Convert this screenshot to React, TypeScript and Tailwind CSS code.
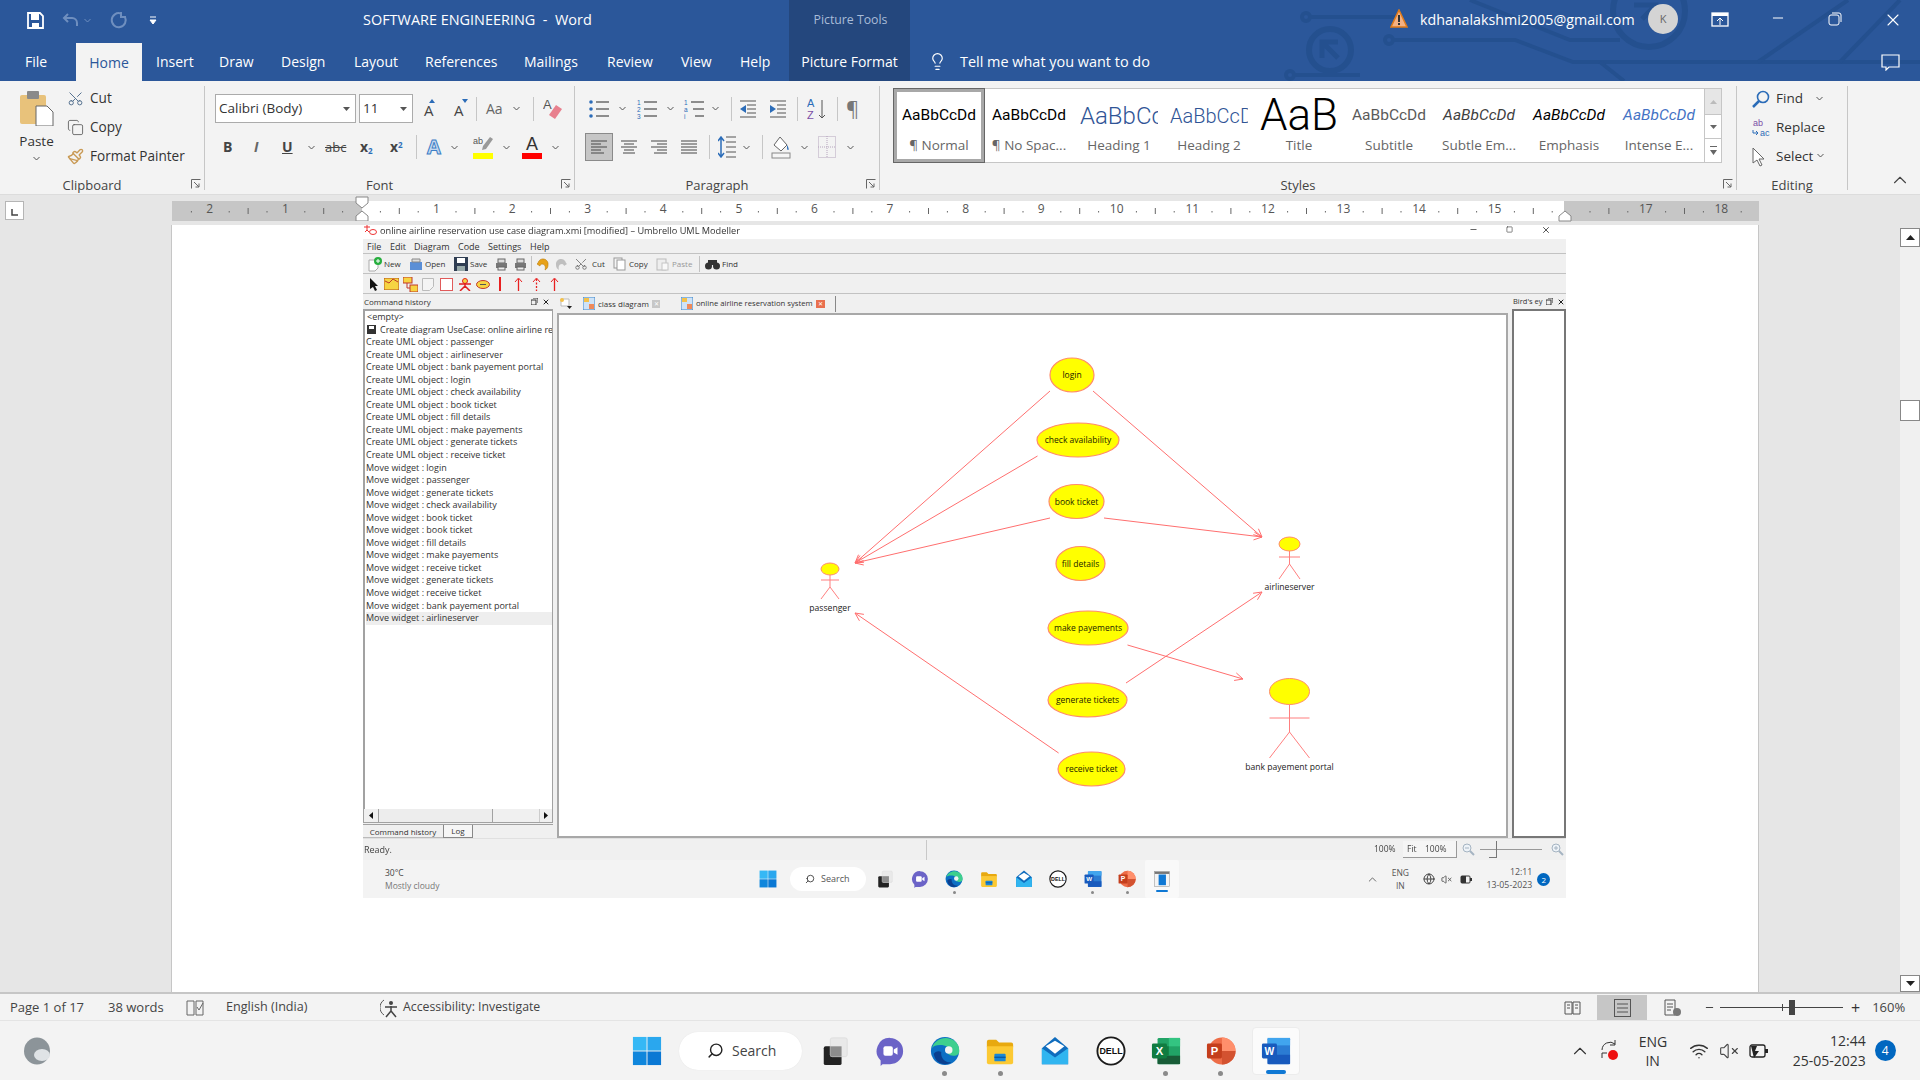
import React from "react";
import { Scissors, Copy as CopyIcon, Paintbrush, Search as SearchIcon, ChevronUp, Wifi, VolumeX, Lightbulb, Square, Minus, X, Globe } from "lucide-react";

const Chev = ({ c = "#555", className = "" }: { c?: string; className?: string }) => (
  <svg width="7" height="5" viewBox="0 0 7 5" className={`shrink-0 ${className}`}><path d="M.5 1 3.5 4 6.5 1" stroke={c} fill="none" /></svg>
);
const Launcher = () => (
  <svg width="10" height="10" viewBox="0 0 10 10" className="absolute right-[3px] bottom-[6px]"><path d="M.5 9.5V.5H9.5M3 3l5 5M8 4.5V8H4.5" stroke="#666" fill="none" /></svg>
);
const VSep = ({ h = "h-[24px]" }: { h?: string }) => <div className={`w-px bg-[#c6c6c6] ${h}`} />;
const GroupSep = () => <div className="w-px h-[104px] mt-[5px] bg-[#c6c6c6] shrink-0" />;
const Label = ({ t, plain }: { t: string; plain?: boolean }) => (
  <div className={`mt-auto h-[20px] leading-[20px] text-center text-[13px] text-[#444] ${plain ? "" : "pr-[20px]"}`}>{t}</div>
);

/* ---------- taskbar icons ---------- */
const I = ({ s, children }: { s: number; children: React.ReactNode }) => <svg width={s} height={s} viewBox="0 0 32 32">{children}</svg>;
const StartIco = ({ s }: { s: number }) => (
  <I s={s}><rect x="1" y="1" width="14.5" height="14.5" fill="#35b8f5" /><rect x="16.5" y="1" width="14.5" height="14.5" fill="#2aa7ee" /><rect x="1" y="16.5" width="14.5" height="14.5" fill="#0f86dc" /><rect x="16.5" y="16.5" width="14.5" height="14.5" fill="#0a78d4" /></I>
);
const TaskView = ({ s }: { s: number }) => (
  <I s={s}><rect x="4" y="11" width="19" height="20" rx="2" fill="#222" /><rect x="11" y="2" width="18" height="20" rx="2" fill="#e9e9e9" stroke="#ddd" /><rect x="11" y="11" width="12" height="11" fill="#8d8d8d" /></I>
);
const Teams = ({ s }: { s: number }) => (
  <I s={s}><path d="M16 2a14 14 0 0 1 0 28H8l-2 2v-6A14 14 0 0 1 16 2z" fill="#6b63c7" /><rect x="9" y="11" width="10" height="10" rx="2" fill="#fff" /><path d="M20 14.5 24 12v8l-4-2.500z" fill="#fff" /></I>
);
const Edge = ({ s }: { s: number }) => (
  <I s={s}><circle cx="16" cy="16" r="15" fill="#0c6fc4" /><path d="M2 13C5 3 17-1 26 5c4 3 6 8 5 13-2 4-9 4-12 1 3-2 2-8-4-9-6-1-11 0-13 3z" fill="#3ecf8e" /><path d="M12 17c-1 6 4 12 11 11-6 4-17 3-19-9 1-2 5-4 8-2z" fill="#0a3f8f" /><circle cx="20" cy="15" r="4" fill="#f3f3f3" /></I>
);
const Folder = ({ s }: { s: number }) => (
  <I s={s}><path d="M2 6a2 2 0 0 1 2-2h8l3 3h13a2 2 0 0 1 2 2v3H2z" fill="#e8a90f" /><path d="M2 11h28v17a2 2 0 0 1-2 2H4a2 2 0 0 1-2-2z" fill="#fcc933" /><rect x="10" y="19" width="12" height="8" rx="1" fill="#1b87d6" /><rect x="10" y="22" width="12" height="1.500" fill="#0b5aa6" /></I>
);
const Mail = ({ s }: { s: number }) => (
  <I s={s}><path d="M2 13 16 1l14 12v17H2z" fill="#0f6cbd" /><path d="M2 13l14 10 14-10v17H2z" fill="#31b5f0" /><path d="M6 11 16 5l10 6-10 8z" fill="#fff" /></I>
);
const Dell = ({ s }: { s: number }) => (
  <I s={s}><circle cx="16" cy="16" r="14.500" fill="#fff" stroke="#1b1b1b" strokeWidth="2" /><text x="16" y="19.500" textAnchor="middle" fontSize="9.500" fontWeight="800" fill="#111" fontFamily="'Liberation Sans',sans-serif">DELL</text></I>
);
const Excel = ({ s }: { s: number }) => (
  <I s={s}><rect x="7" y="2" width="24" height="28" rx="1.500" fill="#21a366" /><rect x="19" y="2" width="12" height="9" fill="#33c481" /><rect x="7" y="21" width="24" height="9" fill="#185c37" /><rect x="7" y="11" width="12" height="10" fill="#107c41" /><rect x="1" y="8" width="16" height="16" rx="1.500" fill="#107c41" /><text x="9" y="20" textAnchor="middle" fontSize="12" fontWeight="700" fill="#fff" fontFamily="'Liberation Sans',sans-serif">X</text></I>
);
const Ppt = ({ s }: { s: number }) => (
  <I s={s}><circle cx="17" cy="16" r="14.500" fill="#ed6c47" /><path d="M17 1.500A14.500 14.500 0 0 1 31.500 16H17z" fill="#ff8f6b" /><path d="M17 16h14.500A14.500 14.500 0 0 1 17 30.500z" fill="#d35230" /><rect x="1" y="8" width="16" height="16" rx="1.500" fill="#c43e1c" /><text x="9" y="20" textAnchor="middle" fontSize="12" fontWeight="700" fill="#fff" fontFamily="'Liberation Sans',sans-serif">P</text></I>
);
const WordIco = ({ s }: { s: number }) => (
  <I s={s}><rect x="7" y="2" width="24" height="28" rx="1.500" fill="#2b7cd3" /><rect x="7" y="2" width="24" height="8" fill="#41a5ee" /><rect x="7" y="20" width="24" height="10" fill="#185abd" /><rect x="1" y="8" width="16" height="16" rx="1.500" fill="#185abd" /><text x="9" y="20" textAnchor="middle" fontSize="11" fontWeight="700" fill="#fff" fontFamily="'Liberation Sans',sans-serif">W</text></I>
);
const Umbr = ({ s }: { s: number }) => (
  <I s={s}><rect x="3" y="3" width="26" height="26" fill="#f4f4f4" stroke="#999" /><rect x="3" y="3" width="26" height="4" fill="#777" /><rect x="10" y="8" width="13" height="19" fill="#0f78d4" /></I>
);
const Cloud = () => (
  <svg width="28" height="28" viewBox="0 0 28 28"><ellipse cx="14" cy="14" rx="13" ry="13.500" fill="#8c9499" /><ellipse cx="19" cy="18" rx="8" ry="6" fill="#dfe3e6" /></svg>
);

/* ---------- title bar art ---------- */
const Circuit = () => (
  <svg className="absolute inset-0 pointer-events-none" width="1920" height="81" viewBox="0 0 1920 81" fill="none" stroke="#24508f" strokeWidth="4">
    <circle cx="1306" cy="17" r="4" /><path d="M1310 17H1395" />
    <circle cx="1330" cy="50" r="21" strokeWidth="6" /><path d="M1322 58l0-16h16M1322 42l16 16" strokeWidth="5" />
    <circle cx="1389" cy="40" r="4" /><path d="M1393 40H1515L1573 62H1920" />
    <circle cx="1290" cy="75" r="4" /><path d="M1294 75H1360" />
    <circle cx="1649" cy="11" r="36" strokeWidth="6" /><path d="M1634 5H1656V20M1656 5l-14 14" strokeWidth="5" />
    <path d="M1470 0 1570 40H1620M1848 0l-90 62M1900 0l-60 62M1600 62l24 19" />
  </svg>
);

/* ---------- ribbon small icons ---------- */
const ListIco = ({ kind }: { kind: number }) => (
  <svg width="22" height="22" viewBox="0 0 22 22">
    {[4, 11, 18].map((y, i) => (
      <g key={y}>
        {kind === 0 ? <circle cx={3 + 0} cy={y} r="1.800" fill="#2b6cb8" /> : <text x="1" y={y + 2.500} fontSize="6.500" fill="#2b6cb8" fontFamily="'Liberation Sans',sans-serif">{kind === 1 ? i + 1 : ["1", "a", "i"][i]}</text>}
        <line x1={8 + (kind === 2 ? i * 2 : 0)} x2="21" y1={y} y2={y} stroke="#555" strokeWidth="1.300" />
      </g>
    ))}
  </svg>
);
const Align = ({ k }: { k: number }) => {
  const rows = k === 0 ? [[1, 17], [1, 11], [1, 17], [1, 11], [1, 14]] : k === 1 ? [[1, 17], [4, 14], [1, 17], [4, 14], [3, 15]] : k === 2 ? [[1, 17], [7, 17], [1, 17], [7, 17], [4, 17]] : [[1, 17], [1, 17], [1, 17], [1, 17], [1, 17]];
  return (
    <svg width="18" height="16" viewBox="0 0 18 16">
      {rows.map((r, i) => <line key={i} x1={r[0]} x2={r[1]} y1={2 + i * 3} y2={2 + i * 3} stroke="#555" strokeWidth="1.100" />)}
    </svg>
  );
};
const Indent = ({ dir }: { dir: number }) => (
  <svg width="18" height="20" viewBox="0 0 18 20">
    <path d="M1 2H17M8 6H17M8 10H17M8 14H17M1 18H17" stroke="#555" strokeWidth="1.200" />
    <path d={dir < 0 ? "M7 6v8L1 10z" : "M1 6v8l6-4z"} fill="#2b6cb8" />
  </svg>
);

const Tab = ({ t, cls }: { t: string; cls: string }) => <div className={`${cls} text-[14px] text-white leading-[38px]`}>{t}</div>;

/* ---------- Header ---------- */
function Header() {
  return (
    <div className="relative h-[81px] bg-[#2b579a] flex shrink-0 overflow-hidden">
      <Circuit />
      <div className="relative w-[789px] flex flex-col shrink-0">
        <div className="h-[43px] flex items-center">
          <svg width="17" height="17" viewBox="0 0 17 17" className="ml-[27px] -mt-[3px]"><path d="M1 1h12l3 3v12H1z" fill="none" stroke="#fff" strokeWidth="1.800" /><rect x="4" y="2" width="8" height="6" fill="#fff" /><rect x="5" y="11" width="7" height="5" fill="#fff" /></svg>
          <svg width="18" height="16" viewBox="0 0 18 16" className="ml-[18px] -mt-[3px]"><path d="M6 2 2 6l4 4M2 6h8a5 5 0 0 1 5 5v3" fill="none" stroke="#6f8fbf" strokeWidth="2" /></svg>
          <Chev c="#6f8fbf" className="ml-[4px] -mt-[3px]" />
          <svg width="18" height="18" viewBox="0 0 18 18" className="ml-[19px] -mt-[3px]"><path d="M11 2.500A7 7 0 1 0 15 6M11 1v5h5" fill="none" stroke="#6f8fbf" strokeWidth="2" /></svg>
          <svg width="8" height="9" viewBox="0 0 8 9" className="ml-[21px] -mt-[3px]"><path d="M1 1h6M1 4h6L4 8z" stroke="#fff" fill="#fff" /></svg>
          <div className="ml-[206px] -mt-[3px] text-[14.450px] text-white whitespace-nowrap">SOFTWARE ENGINEERING&nbsp; -&nbsp; Word</div>
        </div>
        <div className="h-[38px] flex">
          <Tab t="File" cls="ml-[25px] w-[51px]" />
          <div className="w-[66px] bg-[#f3f3f3] text-center text-[14px] text-[#2b579a] leading-[40px]">Home</div>
          <Tab t="Insert" cls="ml-[14px] w-[63px]" />
          <Tab t="Draw" cls="w-[62px]" />
          <Tab t="Design" cls="w-[73px]" />
          <Tab t="Layout" cls="w-[71px]" />
          <Tab t="References" cls="w-[99px]" />
          <Tab t="Mailings" cls="w-[83px]" />
          <Tab t="Review" cls="w-[74px]" />
          <Tab t="View" cls="w-[59px]" />
          <Tab t="Help" cls="w-[40px]" />
        </div>
      </div>
      <div className="relative w-[121px] bg-[#24477d] flex flex-col items-center shrink-0">
        <div className="h-[43px] pt-[11px] pl-[2px] text-[12.300px] text-[#a9bcd8] whitespace-nowrap">Picture Tools</div>
        <div className="h-[38px] leading-[38px] text-[14px] text-white whitespace-nowrap">Picture Format</div>
      </div>
      <div className="relative flex-1 flex flex-col">
        <div className="h-[43px] flex items-start">
          <svg width="18" height="19" viewBox="0 0 18 19" className="ml-[480px] mt-[9px] shrink-0"><path d="M9 1 17 18H1z" fill="#f4b183" stroke="#e07b1a" strokeWidth="1.500" /><rect x="8" y="6" width="2" height="7" fill="#333" /><rect x="8" y="14" width="2" height="2" fill="#333" /></svg>
          <div className="ml-[12px] mt-[9px] w-[214px] shrink-0 text-[14.250px] text-white whitespace-nowrap">kdhanalakshmi2005@gmail.com</div>
          <div className="ml-[14px] mt-[4px] w-[30px] h-[30px] shrink-0 rounded-full bg-[#d4d4d4] flex items-center justify-center text-[11px] text-[#666]">K</div>
          <svg width="18" height="15" viewBox="0 0 18 15" className="ml-[33px] mt-[12px] shrink-0"><rect x="1" y="1" width="16" height="13" fill="none" stroke="#fff" strokeWidth="1.300" /><rect x="1" y="1" width="16" height="3" fill="#fff" /><path d="M9 13V6M6 9l3-3 3 3" stroke="#fff" fill="none" /></svg>
          <Minus size={16} color="#fff" strokeWidth={1.500} className="ml-[41px] mt-[10px] shrink-0" />
          <svg width="14" height="14" viewBox="0 0 14 14" className="ml-[42px] mt-[12px] shrink-0"><rect x="1" y="3" width="10" height="10" rx="2" fill="none" stroke="#fff" /><path d="M4 1h7a2 2 0 0 1 2 2v7" fill="none" stroke="#fff" /></svg>
          <X size={20} color="#fff" strokeWidth={1.300} className="ml-[41px] mt-[10px] shrink-0" />
        </div>
        <div className="h-[38px] flex items-start">
          <Lightbulb size={19} color="#fff" strokeWidth={1.500} className="ml-[18px] mt-[9px] shrink-0" />
          <div className="ml-[13px] mt-[8px] w-[190px] shrink-0 text-[14.450px] text-white whitespace-nowrap">Tell me what you want to do</div>
          <svg width="19" height="17" viewBox="0 0 19 17" className="ml-[731px] mt-[11px] shrink-0"><path d="M1 1h17v12H8l-3 3v-3H1z" fill="none" stroke="#fff" strokeWidth="1.200" /></svg>
        </div>
      </div>
    </div>
  );
}

/* ---------- Ribbon ---------- */
const ClipRow = ({ icon, t }: { icon: React.ReactNode; t: string }) => (
  <div className="h-[29px] flex items-center whitespace-nowrap"><div className="w-[23px]">{icon}</div><span className="text-[13.600px] text-[#333]">{t}</span></div>
);

function Clipboard() {
  return (
    <div className="w-[204px] h-[114px] relative flex flex-col shrink-0">
      <div className="flex pt-[3px]">
        <div className="w-[67px] flex flex-col items-center pl-[6px] pt-[5px]">
          <svg width="36" height="37" viewBox="0 0 36 37"><rect x="1" y="6" width="26" height="29" rx="2" fill="#e8c27b" /><rect x="8" y="2" width="12" height="8" rx="1" fill="#8a8a8a" /><path d="M17 17h11l6 6v14H17z" fill="#fff" stroke="#666" /></svg>
          <div className="text-[13.500px] text-[#333] mt-[6px] leading-[18px]">Paste</div>
          <Chev className="mt-[6px]" />
        </div>
        <div className="flex flex-col">
          <ClipRow t="Cut" icon={<Scissors size={17} color="#54708f" strokeWidth={1.400} className="-rotate-90" />} />
          <ClipRow t="Copy" icon={<CopyIcon size={17} color="#5a5a5a" strokeWidth={1.200} />} />
          <ClipRow t="Format Painter" icon={<Paintbrush size={17} color="#c99a55" strokeWidth={2} />} />
        </div>
      </div>
      <Label t="Clipboard" />
      <Launcher />
    </div>
  );
}

const Letter = ({ t, cls }: { t: React.ReactNode; cls: string }) => <div className={`${cls} text-[#444] leading-none`}>{t}</div>;

function FontGroup() {
  return (
    <div className="w-[369px] h-[114px] relative flex flex-col shrink-0">
      <div className="mt-[13px] h-[29px] flex items-center">
        <div className="ml-[10px] w-[141px] h-[29px] bg-white border border-[#ababab] flex items-center pl-[3px] pr-[5px] justify-between text-[13.500px] text-[#333]">Calibri (Body)<svg width="7" height="4" viewBox="0 0 7 4"><path d="M0 0h7L3.500 4z" fill="#555" /></svg></div>
        <div className="ml-[3px] w-[54px] h-[29px] bg-white border border-[#ababab] flex items-center pl-[3px] pr-[5px] justify-between text-[13.500px] text-[#333]">11<svg width="7" height="4" viewBox="0 0 7 4"><path d="M0 0h7L3.500 4z" fill="#555" /></svg></div>
        <Letter cls="ml-[11px] w-[14px] text-[15px] mt-[3px]" t="A" />
        <svg width="6" height="4" viewBox="0 0 6 4" className="-ml-[9px] -mt-[16px]"><path d="M3 0l3 4H0z" fill="#2b6cb8" /></svg>
        <Letter cls="ml-[19px] w-[14px] text-[15px] mt-[3px]" t="A" />
        <svg width="6" height="4" viewBox="0 0 6 4" className="-ml-[6px] -mt-[16px]"><path d="M0 0h6L3 4z" fill="#2b6cb8" /></svg>
        <div className="ml-[8px]"><VSep /></div>
        <div className="ml-[9px] text-[14px] text-[#666] w-[20px]">Aa</div>
        <Chev className="ml-[7px]" />
        <div className="ml-[13px]"><VSep /></div>
        <svg width="20" height="24" viewBox="0 0 20 24" className="ml-[9px]"><text x="0" y="12" fontSize="13" fill="#555" fontFamily="'Liberation Sans',sans-serif">A</text><path d="M13 8l6 4-7 10-6-4z" fill="#e8808e" /></svg>
      </div>
      <div className="mt-[10px] h-[28px] flex items-center">
        <Letter cls="ml-[18px] w-[10px] text-[14px] font-bold" t="B" />
        <Letter cls="ml-[21px] w-[10px] text-[14px] font-bold italic text-[#666]" t="I" />
        <Letter cls="ml-[18px] w-[13px] text-[14px] font-bold underline" t="U" />
        <Chev className="ml-[13px]" />
        <Letter cls="ml-[10px] w-[22px] text-[13px] line-through" t="abc" />
        <Letter cls="ml-[13px] w-[15px] text-[14px] font-bold" t={<>x<sub className="text-[8px] text-[#2b6cb8]">2</sub></>} />
        <Letter cls="ml-[15px] w-[15px] text-[14px] font-bold" t={<>x<sup className="text-[8px] text-[#2b6cb8]">2</sup></>} />
        <div className="ml-[11px]"><VSep /></div>
        <div className="ml-[10px] w-[17px] text-[20px] leading-none font-bold text-[#c3d8f0] [-webkit-text-stroke:1px_#3d7fc6]">A</div>
        <Chev className="ml-[7px]" />
        <svg width="20" height="24" viewBox="0 0 20 24" className="ml-[15px]"><text x="0" y="9" fontSize="9" fill="#555" fontFamily="'Liberation Sans',sans-serif">ab</text><path d="M17 2l3 2-7 10-4 1 1-4z" fill="#999" /><rect y="18" width="20" height="6" fill="#ffff00" /></svg>
        <Chev className="ml-[10px]" />
        <svg width="20" height="24" viewBox="0 0 20 24" className="ml-[12px]"><text x="10" y="15" textAnchor="middle" fontSize="18" fill="#333" fontFamily="'Liberation Sans',sans-serif">A</text><rect y="18" width="20" height="6" fill="#ff0000" /></svg>
        <Chev className="ml-[10px]" />
      </div>
      <Label t="Font" />
      <Launcher />
    </div>
  );
}

function ParaGroup() {
  return (
    <div className="w-[304px] h-[114px] relative flex flex-col shrink-0">
      <div className="mt-[13px] h-[29px] flex items-center">
        <div className="ml-[13px]"><ListIco kind={0} /></div>
        <Chev className="ml-[9px]" />
        <div className="ml-[10px]"><ListIco kind={1} /></div>
        <Chev className="ml-[9px]" />
        <div className="ml-[9px]"><ListIco kind={2} /></div>
        <Chev className="ml-[7px]" />
        <div className="ml-[12px]"><VSep /></div>
        <div className="ml-[7px]"><Indent dir={-1} /></div>
        <div className="ml-[12px]"><Indent dir={1} /></div>
        <div className="ml-[10px]"><VSep /></div>
        <svg width="20" height="24" viewBox="0 0 20 24" className="ml-[9px]"><text x="0" y="10" fontSize="11" fill="#2b6cb8" fontFamily="'Liberation Sans',sans-serif">A</text><text x="0" y="22" fontSize="11" fill="#7b4fa6" fontFamily="'Liberation Sans',sans-serif">Z</text><path d="M15 3v18M12 18l3 3 3-3" stroke="#555" fill="none" /></svg>
        <div className="ml-[10px]"><VSep /></div>
        <div className="ml-[8px] w-[12px] text-[20px] leading-none text-[#777]">¶</div>
      </div>
      <div className="mt-[10px] h-[28px] flex items-center">
        <div className="ml-[10px] w-[28px] h-[28px] bg-[#c6c6c6] border border-[#8a8a8a] flex items-center justify-center"><Align k={0} /></div>
        <div className="ml-[7px]"><Align k={1} /></div>
        <div className="ml-[12px]"><Align k={2} /></div>
        <div className="ml-[12px]"><Align k={3} /></div>
        <div className="ml-[11px]"><VSep /></div>
        <svg width="18" height="22" viewBox="0 0 18 22" className="ml-[8px]"><path d="M8 1H18M8 6H18M8 11H18M8 16H18M8 21H18" stroke="#555" /><path d="M3 1v20M0 5l3-4 3 4M0 17l3 4 3-4" stroke="#2b6cb8" strokeWidth="1.500" fill="none" /></svg>
        <Chev className="ml-[7px]" />
        <div className="ml-[12px]"><VSep /></div>
        <svg width="20" height="24" viewBox="0 0 20 24" className="ml-[8px]"><path d="M9 2l7 8-6 6-7-6z" fill="#fff" stroke="#666" /><path d="M16 10c2 3 2 5 1 5s-1-2-1-5z" fill="#2b6cb8" /><rect x="1" y="18" width="18" height="5" fill="#f5f5f5" stroke="#888" /></svg>
        <Chev className="ml-[10px]" />
        <svg width="18" height="22" viewBox="0 0 18 22" className="ml-[10px]"><rect x=".5" y=".5" width="17" height="21" fill="none" stroke="#b5a4bd" strokeDasharray="1 1" /><path d="M9 0v22M0 11h18" stroke="#b5a4bd" strokeDasharray="1 1" /></svg>
        <Chev className="ml-[11px]" />
      </div>
      <Label t="Paragraph" />
      <Launcher />
    </div>
  );
}

const StyleItem = ({ preview, pc, name, sel }: { preview: string; pc: string; name: string; sel?: boolean }) => (
  <div className={`w-[90px] h-full shrink-0 flex flex-col items-center ${sel ? "border-[3px] border-[#a8a8a8] outline outline-[#666]" : ""}`}>
    <div className={`h-[44px] w-[78px] overflow-hidden whitespace-nowrap flex items-center ${sel ? "-mt-[3px]" : ""} ${pc}`}>{preview}</div>
    <div className="mt-[1px] text-[13.500px] text-[#666] whitespace-nowrap leading-[22px]">{name}</div>
  </div>
);

function Styles() {
  return (
    <div className="w-[856px] h-[114px] relative flex flex-col shrink-0">
      <div className="ml-[13px] mt-[7px] w-[829px] h-[75px] bg-white border border-[#c6c6c6] flex">
        <StyleItem sel preview="AaBbCcDd" pc="pt-[10px] justify-center text-[15.500px] text-black font-['Roboto']" name="¶ Normal" />
        <StyleItem preview="AaBbCcDd" pc="pt-[10px] justify-center text-[15.500px] text-black font-['Roboto']" name="¶ No Spac..." />
        <StyleItem preview="AaBbCc" pc="pt-[10px] justify-start text-[24px] text-[#2f5496] font-['Roboto'] font-light" name="Heading 1" />
        <StyleItem preview="AaBbCcD" pc="pt-[10px] justify-start text-[20px] text-[#2f5496] font-['Roboto'] font-light" name="Heading 2" />
        <StyleItem preview="AaB" pc="pt-[8px] justify-center text-[44px] text-black font-['Roboto'] font-light" name="Title" />
        <StyleItem preview="AaBbCcDd" pc="pt-[10px] justify-center text-[15.500px] text-[#5a5a5a] font-['Roboto']" name="Subtitle" />
        <StyleItem preview="AaBbCcDd" pc="pt-[10px] justify-center text-[15.500px] italic text-[#404040] font-['Roboto']" name="Subtle Em..." />
        <StyleItem preview="AaBbCcDd" pc="pt-[10px] justify-center text-[15.500px] italic text-black font-['Roboto']" name="Emphasis" />
        <StyleItem preview="AaBbCcDd" pc="pt-[10px] justify-center text-[15.500px] italic text-[#4472c4] font-['Roboto']" name="Intense E..." />
        <div className="ml-auto w-[17px] flex flex-col border-l border-[#c6c6c6]">
          <div className="h-[26px] bg-[#e6e6e6] flex items-center justify-center border-b border-[#c6c6c6]"><svg width="7" height="4" viewBox="0 0 7 4"><path d="M3.500 0 7 4H0z" fill="#bbb" /></svg></div>
          <div className="h-[24px] flex items-center justify-center border-b border-[#c6c6c6]"><svg width="7" height="4" viewBox="0 0 7 4"><path d="M0 0h7L3.500 4z" fill="#666" /></svg></div>
          <div className="flex-1 flex items-center justify-center"><svg width="7" height="9" viewBox="0 0 7 9"><path d="M0 0h7v1H0zM0 4h7L3.500 9z" fill="#666" /></svg></div>
        </div>
      </div>
      <Label t="Styles" />
      <Launcher />
    </div>
  );
}

const EditRow = ({ icon, t, chev }: { icon: React.ReactNode; t: string; chev?: string }) => (
  <div className="h-[29px] flex items-center whitespace-nowrap"><div className="ml-[15px] w-[24px]">{icon}</div><span className="text-[13.500px] text-[#333]">{t}</span>{chev && <Chev className={chev} />}</div>
);

function Editing() {
  return (
    <div className="w-[110px] h-[114px] relative flex flex-col shrink-0">
      <div className="pt-[3px]">
        <EditRow t="Find" chev="ml-[13px]" icon={<svg width="18" height="18" viewBox="0 0 18 18"><circle cx="11" cy="7" r="5.500" fill="none" stroke="#2b6cb8" strokeWidth="1.600" /><path d="M7 11 1 17" stroke="#2b6cb8" strokeWidth="2.500" /></svg>} />
        <EditRow t="Replace" icon={<svg width="20" height="20" viewBox="0 0 20 20"><text x="1" y="8" fontSize="9" fill="#7b4fa6" fontFamily="'Liberation Sans',sans-serif">ab</text><text x="8" y="18" fontSize="9" fill="#2b6cb8" fontFamily="'Liberation Sans',sans-serif">ac</text><path d="M1 12v3h5M4 13l2 2-2 2" stroke="#2b6cb8" fill="none" /></svg>} />
        <EditRow t="Select" chev="ml-[4px] -mt-[2px]" icon={<svg width="14" height="20" viewBox="0 0 14 20"><path d="M1 1v15l4-3 3 6 2-1-3-6h5z" fill="#fff" stroke="#666" /></svg>} />
      </div>
      <Label plain t="Editing" />
    </div>
  );
}

function Ribbon() {
  return (
    <div className="h-[114px] bg-[#f3f3f3] border-b border-[#dcdcdc] flex shrink-0">
      <Clipboard /><GroupSep /><FontGroup /><GroupSep /><ParaGroup /><GroupSep /><Styles /><GroupSep /><Editing /><GroupSep />
      <div className="flex-1 flex justify-end items-end pb-[3px] pr-[9px]"><ChevronUp size={22} color="#444" strokeWidth={1.200} /></div>
    </div>
  );
}

/* ---------- Ruler ---------- */
function Ruler() {
  const cells = [2, 1, "", 1, 2, 3, 4, 5, 6, 7, 8, 9, 10, 11, 12, 13, 14, 15, "", 17, 18];
  const ticks: React.ReactNode[] = [];
  for (let i = 0; i < 21; i++) {
    const x = i * 75.6;
    if (x > 0) ticks.push(<rect key={"m" + i} x={x} y={7} width="1" height="6" fill="#666" />);
    ticks.push(<rect key={"a" + i} x={x + 18.9} y={10} width="1" height="1.500" fill="#666" />);
    ticks.push(<rect key={"b" + i} x={x + 56.7} y={10} width="1" height="1.500" fill="#666" />);
  }
  return (
    <div className="h-[30px] bg-[#e6e6e6] flex shrink-0 relative">
      <div className="ml-[5px] mt-[6px] w-[19px] h-[19px] bg-white border border-[#b5b5b5] flex items-end justify-center pb-[3px]"><svg width="7" height="7" viewBox="0 0 7 7"><path d="M1 0v6h6" stroke="#444" strokeWidth="1.500" fill="none" /></svg></div>
      <div className="ml-[148px] mt-[6px] relative w-[1587px] h-[20px] flex bg-[linear-gradient(90deg,#c6c6c6_190px,#fff_190px,#fff_1392px,#c6c6c6_1392px)]">
        <svg className="absolute inset-0" width="1587" height="20">{ticks}</svg>
        {cells.map((c, i) => (
          <div key={i} className="relative w-[75.600px] text-center text-[12px] leading-[16px] text-[#555]">{c}</div>
        ))}
        <svg className="absolute left-[183px] -top-[5px]" width="14" height="13" viewBox="0 0 14 13"><path d="M1 1h12v6l-6 5-6-5z" fill="#fff" stroke="#888" /></svg>
        <svg className="absolute left-[183px] top-[9px]" width="14" height="11" viewBox="0 0 14 11"><path d="M7 1l6 5v5H1V6z" fill="#fff" stroke="#888" /></svg>
        <svg className="absolute left-[1386px] top-[9px]" width="14" height="12" viewBox="0 0 14 12"><path d="M7 1l6 5v5H1V6z" fill="#fff" stroke="#888" /></svg>
      </div>
    </div>
  );
}

/* ---------- Embedded screenshot ---------- */
const TbText = ({ t, cls, dim }: { t: string; cls: string; dim?: boolean }) => <span className={`${cls} text-[8px] ${dim ? "text-[#999]" : "text-[#333]"}`}>{t}</span>;
const Print = ({ cls }: { cls: string }) => (
  <svg width="13" height="13" viewBox="0 0 13 13" className={cls}><rect x="3" y="1" width="7" height="4" fill="#ddd" stroke="#666" /><rect x="1" y="5" width="11" height="5" fill="#777" /><rect x="3" y="9" width="7" height="3" fill="#eee" stroke="#666" /></svg>
);
const Toolbar1 = () => (
  <div className="h-[20px] pt-[1px] bg-[#f0f0f0] border-b border-[#c2c2c2] flex items-center">
    <svg width="14" height="15" viewBox="0 0 14 15" className="ml-[5px]"><path d="M1 3h9v8l-3 3H1z" fill="#fff" stroke="#aaa" /><circle cx="10" cy="4" r="4" fill="#27ae3e" /><path d="M10 2v4M8 4h4" stroke="#fff" /></svg>
    <TbText cls="ml-[2px] w-[25px]" t="New" />
    <svg width="14" height="13" viewBox="0 0 14 13"><path d="M1 4h12v8H1z" fill="#5b8fd6" /><path d="M3 1h8v3H3z" fill="#ddd" stroke="#888" /></svg>
    <TbText cls="ml-[2px] w-[29px]" t="Open" />
    <svg width="14" height="14" viewBox="0 0 14 14"><rect width="14" height="14" fill="#2f3d52" /><rect x="3" y="1" width="8" height="5" fill="#fff" /><rect x="3" y="9" width="8" height="5" fill="#9aa" /></svg>
    <TbText cls="ml-[2px] w-[25px]" t="Save" />
    <Print cls="" />
    <Print cls="ml-[6px]" />
    <div className="ml-[4px] w-px h-[16px] bg-[#c2c2c2]" />
    <svg width="14" height="13" viewBox="0 0 14 13" className="ml-[4px]"><path d="M2 5a5 5 0 0 1 10 2c0 2-1 4-3 5 1-3 0-6-3-6-1 0-2 1-2 2L1 6z" fill="#e8a218" stroke="#b97c0c" strokeWidth=".6" /></svg>
    <svg width="14" height="13" viewBox="0 0 14 13" className="ml-[4px] -scale-x-100"><path d="M2 5a5 5 0 0 1 10 2c0 2-1 4-3 5 1-3 0-6-3-6-1 0-2 1-2 2L1 6z" fill="#bfbfbf" /></svg>
    <Scissors size={14} color="#555" strokeWidth={1.200} className="ml-[6px] -rotate-90" />
    <TbText cls="ml-[4px] w-[21px]" t="Cut" />
    <svg width="13" height="14" viewBox="0 0 13 14"><rect x="1" y="1" width="8" height="10" fill="#f5f5f5" stroke="#999" /><rect x="4" y="3" width="8" height="10" fill="#fff" stroke="#999" /></svg>
    <TbText cls="ml-[3px] w-[27px]" t="Copy" />
    <svg width="13" height="14" viewBox="0 0 13 14" opacity=".6"><rect x="1" y="2" width="9" height="11" fill="#eee" stroke="#999" /><rect x="6" y="6" width="6" height="7" fill="#fff" stroke="#aaa" /></svg>
    <TbText dim cls="ml-[3px] w-[27px]" t="Paste" />
    <div className="w-px h-[16px] bg-[#c2c2c2]" />
    <svg width="15" height="11" viewBox="0 0 15 11" className="ml-[5px]"><circle cx="3.500" cy="7" r="3.500" fill="#333" /><circle cx="11.500" cy="7" r="3.500" fill="#333" /><rect x="3" y="1" width="9" height="5" fill="#333" /></svg>
    <TbText cls="ml-[2px]" t="Find" />
  </div>
);
const RedArrow = ({ cls, dash }: { cls: string; dash?: boolean }) => (
  <svg width="9" height="14" viewBox="0 0 9 14" className={cls}><path d="M4.500 2v12" stroke="#e82020" strokeWidth="1.300" strokeDasharray={dash ? "2 1.500" : undefined} /><path d="M1 5l3.500-4L8 5" stroke="#e82020" fill="none" /></svg>
);
const Toolbar2 = () => (
  <div className="h-[20px] pt-[1px] bg-[#f0f0f0] border-b border-[#c2c2c2] flex items-center">
    <svg width="9" height="13" viewBox="0 0 9 13" className="ml-[6px]"><path d="M1 0v11l3-2 2 4 2-1-2-4h3z" fill="#111" /></svg>
    <svg width="15" height="12" viewBox="0 0 15 12" className="ml-[6px]"><rect width="15" height="12" fill="#f6d442" stroke="#b3521a" /><path d="M1 3l4 2 4-4 5 3" stroke="#c0392b" fill="none" /></svg>
    <svg width="15" height="15" viewBox="0 0 15 15" className="ml-[4px]"><rect width="9" height="6" fill="#f6d442" stroke="#c0392b" /><rect x="7" y="8" width="8" height="7" fill="#f6d442" stroke="#c0392b" /><path d="M4 6v5h3" stroke="#c0392b" fill="none" /></svg>
    <svg width="12" height="13" viewBox="0 0 12 13" className="ml-[4px]"><path d="M.5.5h11v8l-4 4h-7z" fill="#f4f4f4" stroke="#bbb" /></svg>
    <div className="ml-[6px] w-[13px] h-[13px] bg-white border border-[#e05a5a]" />
    <svg width="12" height="13" viewBox="0 0 12 13" className="ml-[6px]"><circle cx="6" cy="3" r="2.500" fill="#f6d442" stroke="#e01f1f" /><path d="M0 6h12M6 5v4M1 13l5-5 5 5" stroke="#e01f1f" strokeWidth="1.500" fill="none" /></svg>
    <svg width="14" height="9" viewBox="0 0 14 9" className="ml-[5px]"><ellipse cx="7" cy="4.500" rx="6.500" ry="4" fill="#f6d442" stroke="#c0392b" /><path d="M4 4.500h6" stroke="#555" /></svg>
    <div className="ml-[9px] w-[2px] h-[14px] bg-[#e82020]" />
    <RedArrow cls="ml-[13px]" />
    <RedArrow dash cls="ml-[9px]" />
    <RedArrow cls="ml-[9px]" />
  </div>
);

const historyRows = [
  "Create UML object : passenger", "Create UML object : airlineserver", "Create UML object : bank payement portal", "Create UML object : login",
  "Create UML object : check availability", "Create UML object : book ticket", "Create UML object : fill details", "Create UML object : make payements",
  "Create UML object : generate tickets", "Create UML object : receive ticket", "Move widget : login", "Move widget : passenger",
  "Move widget : generate tickets", "Move widget : check availability", "Move widget : book ticket", "Move widget : book ticket",
  "Move widget : fill details", "Move widget : make payements", "Move widget : receive ticket", "Move widget : generate tickets",
  "Move widget : receive ticket", "Move widget : bank payement portal",
];

const DockBtns = () => (
  <div className="flex items-center gap-[4px] shrink-0">
    <svg width="7" height="7" viewBox="0 0 7 7"><rect x="0" y="2" width="5" height="5" fill="none" stroke="#333" /><path d="M2 0h5v5" fill="none" stroke="#333" /></svg>
    <X size={8} color="#222" strokeWidth={3} />
  </div>
);

function LeftDock() {
  return (
    <div className="w-[190px] flex flex-col shrink-0">
      <div className="h-[15px] flex items-center justify-between pl-[1px] pr-[3px] text-[8px] text-[#333] bg-[#f0f0f0]">Command history<DockBtns /></div>
      <div className="h-[500px] bg-white border-t-2 border-l-2 border-r border-[#a2a2a2] pl-[1px] overflow-hidden text-[9px] text-[#333] leading-[12.550px] whitespace-nowrap">
        <div className="h-[12.550px] pl-[1px]">&lt;empty&gt;</div>
        <div className="h-[12.550px] flex items-center"><svg width="9" height="9" viewBox="0 0 9 9" className="mr-[4px] ml-[1px] shrink-0"><rect width="9" height="9" fill="#333" /><rect x="2" y="1" width="5" height="3" fill="#fff" /></svg>Create diagram UseCase: online airline re</div>
        {historyRows.map((r, i) => <div key={i} className="h-[12.550px]">{r}</div>)}
        <div className="h-[12.550px] bg-[#eeeeee]">Move widget : airlineserver</div>
      </div>
      <div className="h-[14px] bg-[#f0f0f0] border-l border-r border-b border-[#a2a2a2] flex items-center">
        <div className="w-[14px] flex justify-center"><svg width="4" height="7" viewBox="0 0 4 7"><path d="M4 0v7L0 3.500z" fill="#111" /></svg></div>
        <div className="w-[115px] h-full bg-[#ededed] border-l border-r border-[#a2a2a2]" />
        <div className="ml-auto w-[13px] h-full border-l border-[#ccc] flex justify-center items-center"><svg width="4" height="7" viewBox="0 0 4 7"><path d="M0 0v7l4-3.500z" fill="#111" /></svg></div>
      </div>
      <div className="mt-[1px] h-[14px] flex text-[8px] text-[#333] border-t border-[#a2a2a2] bg-[#f0f0f0]">
        <div className="w-[80px] text-center leading-[13px] border-b border-[#bbb]">Command history</div>
        <div className="w-[30px] text-center leading-[12px] bg-[#f6f6f6] border border-t-0 border-[#888]">Log</div>
      </div>
    </div>
  );
}

const actors = [
  { cx: 830, hy: 569, rx: 9, ry: 6, arm: 580, hip: 587, foot: 599, ly: 611, name: "passenger" },
  { cx: 1289.500, hy: 544, rx: 10.500, ry: 7, arm: 557, hip: 564, foot: 579, ly: 590, name: "airlineserver" },
  { cx: 1289.500, hy: 691.500, rx: 20, ry: 13, arm: 718, hip: 732, foot: 758, ly: 770, name: "bank payement portal" },
];
const usecases = [
  { cx: 1072, cy: 375, rx: 22, n: "login" }, { cx: 1078, cy: 440, rx: 41, n: "check availability" }, { cx: 1076.500, cy: 501.500, rx: 27.500, n: "book ticket" },
  { cx: 1080.500, cy: 563.500, rx: 24.500, n: "fill details" }, { cx: 1088, cy: 628, rx: 40, n: "make payements" }, { cx: 1087.500, cy: 700, rx: 39.500, n: "generate tickets" }, { cx: 1091.500, cy: 769, rx: 33.500, n: "receive ticket" },
];
const links = [
  [1050, 391, 855, 563], [1037.500, 456, 855, 563], [1050, 518, 855, 563], [1093, 391, 1262, 537], [1104, 518, 1262, 537], [1127.500, 645, 1243, 679], [1126, 683, 1262, 592], [1058.600, 753, 855, 613],
];
function Diagram() {
  const head = (l: number[]) => {
    const a = Math.atan2(l[3] - l[1], l[2] - l[0]);
    const p = (d: number) => `${l[2] - 9 * Math.cos(a + d)} ${l[3] - 9 * Math.sin(a + d)}`;
    return `M${p(0.45)}L${l[2]} ${l[3]}L${p(-0.45)}`;
  };
  return (
    <svg width="947" height="520" viewBox="559 315 947 520" fontFamily="'Open Sans',sans-serif" fontSize="8.600">
      {links.map((l, i) => (
        <g key={i} stroke="#ff6f6f" fill="none" strokeWidth="1"><line x1={l[0]} y1={l[1]} x2={l[2]} y2={l[3]} /><path d={head(l)} /></g>
      ))}
      {usecases.map((u) => (
        <g key={u.n}><ellipse cx={u.cx} cy={u.cy} rx={u.rx} ry="17" fill="#ffff00" stroke="#ff8c6a" strokeWidth="1.200" /><text x={u.cx} y={u.cy + 3} textAnchor="middle" fill="#1c1c00" fontSize="8.500">{u.n}</text></g>
      ))}
      {actors.map((a) => (
        <g key={a.name}>
          <ellipse cx={a.cx} cy={a.hy} rx={a.rx} ry={a.ry} fill="#ffff00" stroke="#ff8c6a" strokeWidth="1" />
          <path d={`M${a.cx} ${a.hy + a.ry}V${a.hip}M${a.cx - a.rx} ${a.arm}H${a.cx + a.rx}M${a.cx - a.rx} ${a.foot}L${a.cx} ${a.hip}L${a.cx + a.rx} ${a.foot}`} stroke="#ff7f7f" fill="none" />
          <text x={a.cx} y={a.ly} textAnchor="middle" fill="#222">{a.name}</text>
        </g>
      ))}
    </svg>
  );
}

const TabIco = () => (
  <svg width="12" height="13" viewBox="0 0 12 13"><rect width="12" height="13" fill="#cfe3f7" stroke="#3c85c9" /><rect x="1" y="1" width="5" height="4" fill="#f4c14a" /><rect x="6" y="7" width="5" height="5" fill="#ef8a5b" /></svg>
);

function CenterCol() {
  return (
    <div className="w-[951px] ml-[4px] flex flex-col shrink-0">
      <div className="h-[19px] bg-[#f0f0f0] flex items-center text-[8px] text-[#333] whitespace-nowrap">
        <svg width="12" height="11" viewBox="0 0 12 11" className="ml-[3px]"><path d="M1 1h8v7H1z" fill="#fff" stroke="#bbb" /><circle cx="2" cy="2" r="2" fill="#f4c14a" /><path d="M7 8h5L9.500 11z" fill="#222" /></svg>
        <div className="ml-[11px]"><TabIco /></div>
        <span className="ml-[3px] w-[54px]">class diagram</span>
        <div className="w-[8px] h-[8px] bg-[#c7c7c7] text-center text-[6px] leading-[8px] text-white">✕</div>
        <div className="ml-[21px]"><TabIco /></div>
        <span className="ml-[3px] w-[120px] text-[7.700px]">online airline reservation system</span>
        <div className="w-[9px] h-[8px] bg-[#e9704f] text-center text-[6px] leading-[8px] text-white">✕</div>
        <div className="ml-[10px] w-px h-[16px] bg-[#888]" />
      </div>
      <div className="h-[525px] bg-white border-2 border-[#a8a8a8] overflow-hidden"><Diagram /></div>
    </div>
  );
}

function RightDock() {
  return (
    <div className="w-[54px] ml-[4px] flex flex-col shrink-0">
      <div className="h-[15px] flex items-center text-[7.500px] text-[#333] bg-[#f0f0f0] whitespace-nowrap pl-[1px] pr-[1px]"><span className="w-[36px]">Bird's ey</span><DockBtns /></div>
      <div className="h-[529px] bg-white border-2 border-[#777]" />
    </div>
  );
}

const Magnifier = ({ plus }: { plus?: boolean }) => (
  <svg width="13" height="13" viewBox="0 0 13 13"><circle cx="5" cy="5" r="4" fill="#eef3f8" stroke="#a5b4c2" /><path d="M8 8l4 4" stroke="#a5b4c2" strokeWidth="2" /><path d={plus ? "M3 5h4M5 3v4" : "M3 5h4"} stroke="#a5b4c2" /></svg>
);

function InnerTaskbar() {
  const list = [
    { I: TaskView }, { I: Teams }, { I: Edge, dot: 1 }, { I: Folder }, { I: Mail }, { I: Dell }, { I: WordIco, dot: 1 }, { I: Ppt, dot: 1 }, { I: Umbr, act: 1 },
  ];
  return (
    <div className="h-[38px] bg-[#f3f3f3] flex items-center text-[#555]">
      <div className="ml-[22px] w-[374px] text-[8.500px] leading-[13px]"><div className="text-[#444]">30°C</div><div className="text-[#777]">Mostly cloudy</div></div>
      <StartIco s={18} />
      <div className="ml-[13px] w-[76px] h-[24px] rounded-full bg-white flex items-center text-[9px] text-[#555]"><SearchIcon size={10} color="#333" className="ml-[15px] mr-[6px] -scale-x-100" />Search</div>
      <div className="ml-[2px] flex">
        {list.map((it, i) => (
          <div key={i} className={`w-[34.600px] h-[38px] flex flex-col items-center pt-[10px] ${it.act ? "bg-[#f9f9f9] rounded-[2px]" : ""}`}>
            <it.I s={18} />
            {it.dot && <div className="mt-[3px] w-[3px] h-[3px] rounded-full bg-[#888]" />}
            {it.act && <div className="mt-[2px] w-[12px] h-[2px] rounded-full bg-[#0f78d4]" />}
          </div>
        ))}
      </div>
      <ChevronUp size={13} color="#333" strokeWidth={1.300} className="ml-[187px] shrink-0" />
      <div className="ml-[10px] w-[22px] text-center text-[8.500px] text-[#555] leading-[13px]">ENG<br />IN</div>
      <Globe size={12} color="#444" className="ml-[12px] shrink-0" />
      <VolumeX size={11} color="#555" className="ml-[6px] shrink-0" />
      <svg width="12" height="9" viewBox="0 0 12 9" className="ml-[8px] shrink-0"><rect x="1" y="1" width="9" height="7" rx="1" fill="none" stroke="#333" /><rect x="1" y="1" width="5" height="7" fill="#333" /><rect x="10" y="3" width="2" height="3" fill="#333" /></svg>
      <div className="ml-[10px] w-[50px] text-right text-[8.800px] text-[#555] leading-[13px] whitespace-nowrap">12:11<br />13-05-2023</div>
      <div className="ml-[5px] w-[13px] h-[13px] rounded-full bg-[#0067c0] text-white text-[8px] leading-[13px] text-center">2</div>
    </div>
  );
}

function Embedded() {
  return (
    <div className="w-[1203px] h-[673px] flex flex-col font-['Open_Sans',sans-serif] blur-[0.3px]">
      <div className="h-[14px] bg-white flex items-start text-[9.200px] leading-[11px] text-[#333] whitespace-nowrap">
        <svg width="13" height="11" viewBox="0 0 13 11" className="ml-[1px] shrink-0"><path d="M3 0v5M0 2h6M1 7l2-2 2 2" stroke="#e33" fill="none" /><ellipse cx="9" cy="7" rx="3.500" ry="2.500" fill="none" stroke="#e33" /></svg>
        <span className="ml-[3px] w-[352px]">online airline reservation use case diagram.xmi [modified] – Umbrello UML Modeller</span>
        <Minus size={9} color="#333" className="ml-[737px] shrink-0" />
        <Square size={7} color="#333" className="ml-[28px] mt-[1px] shrink-0" />
        <X size={10} color="#333" className="ml-[28px] shrink-0" />
      </div>
      <div className="h-[15px] pt-[1px] bg-[#f0f0f0] border-b border-[#c2c2c2] flex items-center text-[9px] text-[#333]">
        <span className="ml-[4px] w-[23px]">File</span><span className="w-[24px]">Edit</span><span className="w-[44px]">Diagram</span><span className="w-[30px]">Code</span><span className="w-[42px]">Settings</span><span>Help</span>
      </div>
      <Toolbar1 />
      <Toolbar2 />
      <div className="h-[544px] flex bg-[#f0f0f0]"><LeftDock /><CenterCol /><RightDock /></div>
      <div className="h-[22px] bg-[#f0f0f0] flex items-center text-[9px] text-[#444] border-t border-[#e0e0e0]">
        <span className="ml-[1px] w-[562px]">Ready.</span>
        <div className="w-px h-[20px] bg-[#c8c8c8]" />
        <span className="ml-[447px] w-[29px] text-[8.500px]">100%</span>
        <div className="w-[54px] h-[17px] bg-[#f5f5f5] border-r border-b border-[#999] flex items-center text-[8.500px]"><span className="ml-[4px] w-[18px]">Fit</span><span>100%</span></div>
        <div className="ml-[5px]"><Magnifier /></div>
        <div className="ml-[5px] relative w-[62px] h-[1px] bg-[#999]"><div className="absolute left-[9px] -top-[8px] w-[8px] h-[17px] border-r border-b border-[#777]" /></div>
        <div className="ml-[9px]"><Magnifier plus /></div>
      </div>
      <InnerTaskbar />
    </div>
  );
}

/* ---------- Status + taskbar ---------- */
function StatusBar() {
  return (
    <div className="h-[28px] pt-[1px] bg-[#f3f3f3] border-t-2 border-[#c6c6c6] flex items-center text-[13px] text-[#444] whitespace-nowrap shrink-0">
      <span className="ml-[10px] w-[98px]">Page 1 of 17</span>
      <span className="w-[78px]">38 words</span>
      <svg width="18" height="18" viewBox="0 0 18 18"><path d="M1 2h7v14H1zM10 2h7v14h-7z" fill="none" stroke="#666" /><path d="M11 8l2 3 4-7" stroke="#666" fill="none" /></svg>
      <span className="ml-[22px] w-[154px] text-[12.600px]">English (India)</span>
      <svg width="19" height="20" viewBox="0 0 19 20"><path d="M4 2a9 9 0 0 0 0 15" stroke="#555" fill="none" /><circle cx="11" cy="5" r="2" fill="#444" /><path d="M5 9h12M11 8v5M6 19l5-6 5 6" stroke="#444" strokeWidth="1.500" fill="none" /></svg>
      <span className="ml-[4px] w-[1161px] text-[12.300px]">Accessibility: Investigate</span>
      <svg width="17" height="16" viewBox="0 0 17 16"><path d="M1 2h7v12H1zM9 2h7v12H9zM3 5h3M3 8h3M11 5h3M11 8h3" fill="none" stroke="#555" /></svg>
      <div className="ml-[16px] w-[50px] h-[26px] bg-[#c6c6c6] flex items-center justify-center">
        <svg width="17" height="18" viewBox="0 0 17 18"><rect x=".5" y=".5" width="16" height="17" fill="none" stroke="#555" /><path d="M3 5h11M3 9h11M3 13h11" stroke="#555" /></svg>
      </div>
      <svg width="18" height="18" viewBox="0 0 18 18" className="ml-[17px]"><path d="M1 1h10v15H1zM3 5h6M3 8h6M3 11h4" fill="none" stroke="#555" /><circle cx="13" cy="13" r="4" fill="#777" /></svg>
      <Minus size={11} color="#333" className="ml-[22px] shrink-0" />
      <div className="ml-[5px] relative w-[123px] h-px bg-[#444]"><div className="absolute left-[62px] -top-[3px] w-px h-[7px] bg-[#444]" /><div className="absolute left-[69px] -top-[7px] w-[6px] h-[15px] bg-[#444]" /></div>
      <span className="ml-[8px] text-[16px] leading-none text-[#333]">+</span>
      <span className="ml-[12px] text-[13px]">160%</span>
    </div>
  );
}

function Taskbar() {
  const list = [
    { I: TaskView }, { I: Teams }, { I: Edge, dot: 1 }, { I: Folder, dot: 1 }, { I: Mail }, { I: Dell }, { I: Excel, dot: 1 }, { I: Ppt, dot: 1 }, { I: WordIco, act: 1 },
  ];
  return (
    <div className="h-[60px] bg-[#f3f3f3] border-t border-[#e4e4e4] flex items-center shrink-0">
      <div className="ml-[23px]"><Cloud /></div>
      <div className="ml-[581px]"><StartIco s={30} /></div>
      <div className="ml-[17px] w-[123px] h-[38px] rounded-full bg-white flex items-center text-[14px] text-[#444] shadow-[0_0_1px_#ddd]">
        <SearchIcon size={17} color="#222" className="ml-[28px] mr-[8px] -scale-x-100" />Search
      </div>
      <div className="ml-[5px] flex">
        {list.map((it, i) => (
          <div key={i} className={`w-[55.200px] h-[59px] flex flex-col items-center pt-[15px] ${it.act ? "relative" : ""}`}>
            {it.act && <div className="absolute left-[3px] top-[6px] w-[48px] h-[48px] bg-[#fbfbfb] rounded-[4px] border border-[#ececec]" />}
            <div className="relative"><it.I s={30} /></div>
            {it.dot && <div className="mt-[5px] w-[5px] h-[5px] rounded-full bg-[#8a8a8a]" />}
            {it.act && <div className="relative mt-[4px] w-[20px] h-[4px] rounded-full bg-[#0f78d4]" />}
          </div>
        ))}
      </div>
      <ChevronUp size={22} color="#333" strokeWidth={1.200} className="ml-[265px] shrink-0" />
      <svg width="20" height="24" viewBox="0 0 20 24" className="ml-[8px]"><path d="M3 11a8 8 0 0 1 13-6M16 1v5h-5M3 19v-5h5" fill="none" stroke="#333" /><circle cx="14" cy="16" r="5" fill="#ee1010" /></svg>
      <div className="ml-[20px] w-[28px] text-center text-[14px] leading-[19px] text-[#333]">ENG<br />IN</div>
      <Wifi size={20} color="#333" strokeWidth={1.700} className="ml-[22px] shrink-0" />
      <VolumeX size={20} color="#444" strokeWidth={1.300} className="ml-[10px] shrink-0" />
      <svg width="20" height="16" viewBox="0 0 20 16" className="ml-[10px] shrink-0"><rect x="1" y="2" width="15" height="12" rx="2" fill="none" stroke="#222" strokeWidth="1.300" /><rect x="16" y="6" width="3" height="4" fill="#222" /><path d="M2 3h6l-2 5h4l-5 7z" fill="#222" /></svg>
      <div className="ml-[20px] w-[77px] text-right text-[14px] leading-[20px] text-[#333] whitespace-nowrap">12:44<br />25-05-2023</div>
      <div className="ml-[9px] w-[21px] h-[21px] rounded-full bg-[#0067c0] text-white text-[12px] leading-[21px] text-center">4</div>
    </div>
  );
}

export default function App() {
  return (
    <div className="w-[1920px] h-[1080px] flex flex-col overflow-hidden bg-[#e6e6e6] font-['Open_Sans',sans-serif]">
      <Header />
      <Ribbon />
      <Ruler />
      <div className="h-[767px] flex shrink-0 overflow-hidden">
        <div className="w-[171px] shrink-0" />
        <div className="w-[1588px] bg-white border-x border-[#c6c6c6] pl-[191px] shrink-0"><Embedded /></div>
        <div className="ml-auto w-[20px] flex flex-col bg-[#f0f0f0] mt-[3px]">
          <div className="h-[19px] bg-white border border-[#888] flex items-center justify-center"><svg width="9" height="5" viewBox="0 0 9 5"><path d="M4.500 0 9 5H0z" fill="#222" /></svg></div>
          <div className="mt-[153px] h-[21px] bg-white border border-[#888]" />
          <div className="mt-auto h-[17px] bg-white border border-[#888] flex items-center justify-center"><svg width="9" height="5" viewBox="0 0 9 5"><path d="M0 0h9L4.500 5z" fill="#222" /></svg></div>
        </div>
      </div>
      <StatusBar />
      <Taskbar />
    </div>
  );
}
